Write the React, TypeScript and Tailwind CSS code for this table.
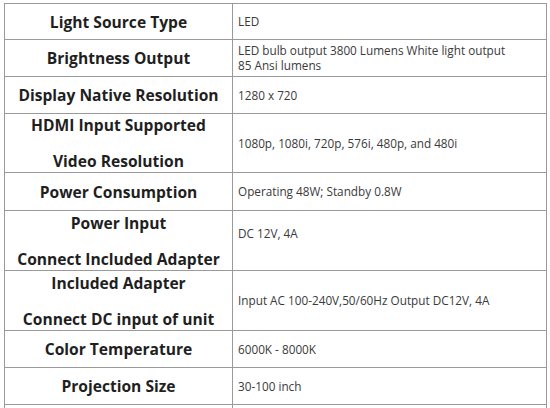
import React from "react";

type Row = { h: string; label: string[]; value: string[] };

const rows: Row[] = [
  { h: "h-[36px]", label: ["Light Source Type"], value: ["LED"] },
  { h: "h-[37px]", label: ["Brightness Output"], value: ["LED bulb output 3800 Lumens White light output", "85 Ansi lumens"] },
  { h: "h-[37px]", label: ["Display Native Resolution"], value: ["1280 x 720"] },
  { h: "h-[59px]", label: ["HDMI Input Supported", "Video Resolution"], value: ["1080p, 1080i, 720p, 576i, 480p, and 480i"] },
  { h: "h-[38px]", label: ["Power Consumption"], value: ["Operating 48W; Standby 0.8W"] },
  { h: "h-[60px]", label: ["Power Input", "Connect Included Adapter"], value: ["DC 12V, 4A", "\u00a0"] },
  { h: "h-[60px]", label: ["Included Adapter", "Connect DC input of unit"], value: ["Input AC 100-240V,50/60Hz Output DC12V, 4A"] },
  { h: "h-[37px]", label: ["Color Temperature"], value: ["6000K - 8000K"] },
  { h: "h-[37px]", label: ["Projection Size"], value: ["30-100 inch"] },
  { h: "h-[37px]", label: [""], value: [""] },
];

export default function App() {
  return (
    <div className="w-[550px] h-[408px] overflow-hidden bg-white pt-[3px] pl-[4px]" style={{ fontFamily: '"Open Sans", "Liberation Sans", sans-serif' }}>
      <div className="w-[543px] border-t border-l border-r border-[#9a9a9a]">
        {rows.map((r, i) => (
          <div key={i} className={`flex ${r.h} border-b border-[#9a9a9a]`}>
            <div className="w-[228px] shrink-0 border-r border-[#9a9a9a] flex flex-col items-center justify-center gap-[18px] text-[15.6px] leading-[18px] font-bold text-[#1f1f1f]">
              {r.label.map((l, j) => (
                <div key={j} className="whitespace-nowrap">{l}</div>
              ))}
            </div>
            <div className="flex-1 flex flex-col justify-center pl-[5px] text-[11.75px] leading-[15px] text-[#3a3a3a]">
              {r.value.map((v, j) => (
                <div key={j} className="whitespace-nowrap">{v}</div>
              ))}
            </div>
          </div>
        ))}
      </div>
    </div>
  );
}
